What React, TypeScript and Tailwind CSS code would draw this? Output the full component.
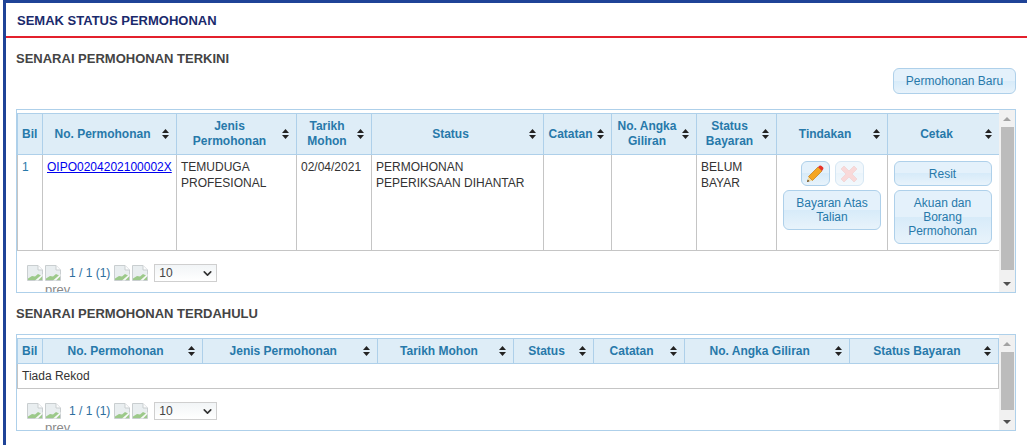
import { ChevronDown } from "lucide-react";

const font = "font-['Liberation_Sans',Arial,sans-serif]";

const SortIcon = () => (
  <svg width="7" height="10" viewBox="0 0 7 10" className="shrink-0 fill-[#222222]">
    <path d="M3.5 0 L7 4 L0 4 Z" />
    <path d="M0 6 L7 6 L3.5 10 Z" />
  </svg>
);

const BrokenImage = () => (
  <svg width="16" height="16" viewBox="0 0 16 16" className="shrink-0">
    <path d="M0.5 0.5 H11 L15.5 5 V15.5 H0.5 Z" fill="#e9eef0" stroke="#c9ced0" />
    <path d="M11 0.5 V5 H15.5" fill="#fbfcfc" stroke="#c9ced0" />
    <path d="M1 15 V13.5 L5 11 L8 11.5 L11 9 L15 11 V15 Z" fill="#9cc98a" />
    <path d="M8 15.5 L15.5 9 V11 L11 15.5 Z" fill="#f6f8f7" />
  </svg>
);

const Scrollbar = ({ thumb }: { thumb: string }) => (
  <div className="flex w-[16px] flex-col items-center bg-[#f1f1f1]">
    <div className="flex h-[17px] w-full items-center justify-center">
      <div className="h-0 w-0 border-x-[4px] border-b-[4px] border-x-transparent border-b-[#a3a3a3]" />
    </div>
    <div className={`${thumb} w-[13px] bg-[#bcbcbc]`} />
    <div className="flex-1" />
    <div className="flex h-[17px] w-full items-center justify-center">
      <div className="h-0 w-0 border-x-[4px] border-t-[4px] border-x-transparent border-t-[#505050]" />
    </div>
  </div>
);

const Pager = () => (
  <div className="flex items-center pl-[10px] pt-[13px]">
    <BrokenImage />
    <div className="relative ml-[2px] flex">
      <BrokenImage />
      <span className="absolute left-0 top-[18px] text-[13px] leading-[14px] text-[#8a8a8a]">prev</span>
    </div>
    <span className="ml-[8px] text-[12px] text-[#2e6e9e]">1 / 1 (1)</span>
    <div className="ml-[4px] flex gap-[2px]">
      <BrokenImage />
      <BrokenImage />
    </div>
    <div className="ml-[6px] flex h-[18px] w-[63px] items-center justify-between border border-[#cfcfcf] bg-gradient-to-b from-[#f2f5f7] to-white pl-[4px] pr-[2px] text-[12px] text-[#444444]">
      10
      <ChevronDown size={13} strokeWidth={3} className="text-[#333333]" />
    </div>
  </div>
);

const Th = ({ label, sort = true, width }: { label: string; sort?: boolean; width: string }) => (
  <th className={`${width} border border-[#aed0ea] bg-[#deedf7] p-0 align-middle`}>
    <div className="flex items-center pl-[4px] pr-[7px]">
      <span className={`${sort ? "pr-[4px]" : ""} flex-1 text-center text-[12px] font-bold leading-[15px] text-[#2779aa]`}>
        {label}
      </span>
      {sort && <SortIcon />}
    </div>
  </th>
);

const Td = ({ children, width }: { children?: React.ReactNode; width?: string }) => (
  <td className={`${width ?? ""} border border-[#c5c5c5] px-[4px] pt-[4px] align-top text-[12px] leading-[16px] text-[#333333]`}>
    {children}
  </td>
);

const Btn = ({ children, className }: { children: React.ReactNode; className: string }) => (
  <div
    className={`${className} flex items-center justify-center rounded-[6px] border border-[#aed0ea] bg-[linear-gradient(#e4f1fb_50%,#d7ebf9_50%,#e8f3fb)] text-center text-[12px] leading-[14px] text-[#2779aa]`}
  >
    {children}
  </div>
);

const Pencil = () => (
  <svg width="18" height="18" viewBox="0 0 18 18">
    <path d="M1 17 L2.5 11.5 L6.5 15.5 Z" fill="#f3dca4" />
    <path d="M1 17 L1.7 14.5 L3.5 16.2 Z" fill="#5a3a10" />
    <path d="M2.5 11.5 L12 2 L16 6 L6.5 15.5 Z" fill="#f5a623" stroke="#b96f0a" strokeWidth="0.6" />
    <path d="M12 2 L13.5 0.7 C14.2 0.2 15 0.3 15.6 0.9 L17 2.3 C17.6 3 17.6 3.7 17 4.4 L16 6 Z" fill="#e8342a" />
  </svg>
);

const Cross = () => (
  <svg width="18" height="18" viewBox="0 0 18 18">
    <path
      d="M1 4 L4 1 L9 6 L14 1 L17 4 L12 9 L17 14 L14 17 L9 12 L4 17 L1 14 L6 9 Z"
      fill="#f5b5b5"
      stroke="#e0a0a0"
      strokeWidth="0.6"
    />
  </svg>
);

const App = () => {
  return (
    <div className={`${font} h-[445px] w-[1027px] overflow-hidden bg-white pl-[3px]`}>
      <div className="h-full border-l-[3px] border-t-[3px] border-[#1f4397]">
        <div className="flex h-[35px] items-center border-b-[2px] border-[#e3202c] pl-[11px] pt-[3px] text-[13px] font-bold text-[#1a2a6c]">
          SEMAK STATUS PERMOHONAN
        </div>
        <div className="pl-[10px] pr-[11px]">
          <h2 className="pt-[14px] text-[13px] font-bold leading-[14px] text-[#444444]">SENARAI PERMOHONAN TERKINI</h2>
          <div className="flex justify-end pt-[2px]">
            <Btn className="h-[26px] w-[123px]">Permohonan Baru</Btn>
          </div>

          <div className="mt-[15px] flex h-[184px] overflow-hidden border border-[#aed0ea]">
            <div className="w-[982px] pt-[3px]">
              <table className="w-[982px] table-fixed border-collapse">
                <thead>
                  <tr className="h-[41px]">
                    <Th label="Bil" sort={false} width="w-[25px]" />
                    <Th label="No. Permohonan" width="w-[134px]" />
                    <Th label="Jenis Permohonan" width="w-[120px]" />
                    <Th label="Tarikh Mohon" width="w-[75px]" />
                    <Th label="Status" width="w-[172px]" />
                    <Th label="Catatan" width="w-[68px]" />
                    <Th label="No. Angka Giliran" width="w-[85px]" />
                    <Th label="Status Bayaran" width="w-[80px]" />
                    <Th label="Tindakan" width="w-[111px]" />
                    <Th label="Cetak" width="w-[112px]" />
                  </tr>
                </thead>
                <tbody>
                  <tr className="h-[96px]">
                    <Td>
                      <span className="text-[#2779aa]">1</span>
                    </Td>
                    <Td>
                      <a href="#" className="text-[#0000ee] underline">OIPO0204202100002X</a>
                    </Td>
                    <Td>TEMUDUGA PROFESIONAL</Td>
                    <Td>02/04/2021</Td>
                    <Td>PERMOHONAN PEPERIKSAAN DIHANTAR</Td>
                    <Td />
                    <Td />
                    <Td>BELUM BAYAR</Td>
                    <Td>
                      <div className="mt-[2px] flex flex-col items-center gap-[4px]">
                        <div className="flex gap-[5px]">
                          <Btn className="h-[25px] w-[29px]"><Pencil /></Btn>
                          <Btn className="h-[25px] w-[29px] opacity-50"><Cross /></Btn>
                        </div>
                        <Btn className="h-[40px] w-[98px]">
                          <span>Bayaran Atas<br />Talian</span>
                        </Btn>
                      </div>
                    </Td>
                    <Td>
                      <div className="mt-[2px] flex flex-col items-center gap-[4px] pr-[2px]">
                        <Btn className="h-[25px] w-[98px]">Resit</Btn>
                        <Btn className="h-[54px] w-[98px]">
                          <span>Akuan dan<br />Borang<br />Permohonan</span>
                        </Btn>
                      </div>
                    </Td>
                  </tr>
                </tbody>
              </table>
              <Pager />
            </div>
            <Scrollbar thumb="h-[143px]" />
          </div>

          <h2 className="pt-[14px] text-[13px] font-bold leading-[14px] text-[#444444]">SENARAI PERMOHONAN TERDAHULU</h2>

          <div className="mt-[13px] flex h-[97px] overflow-hidden border border-[#aed0ea]">
            <div className="w-[982px] pt-[3px]">
              <table className="w-[982px] table-fixed border-collapse">
                <thead>
                  <tr className="h-[25px]">
                    <Th label="Bil" sort={false} width="w-[25px]" />
                    <Th label="No. Permohonan" width="w-[160px]" />
                    <Th label="Jenis Permohonan" width="w-[175px]" />
                    <Th label="Tarikh Mohon" width="w-[136px]" />
                    <Th label="Status" width="w-[79px]" />
                    <Th label="Catatan" width="w-[91px]" />
                    <Th label="No. Angka Giliran" width="w-[165px]" />
                    <Th label="Status Bayaran" width="w-[149px]" />
                  </tr>
                </thead>
                <tbody>
                  <tr className="h-[25px]">
                    <td colSpan={8} className="border border-[#c5c5c5] px-[4px] text-[12px] text-[#333333]">
                      Tiada Rekod
                    </td>
                  </tr>
                </tbody>
              </table>
              <Pager />
            </div>
            <Scrollbar thumb="h-[58px]" />
          </div>
        </div>
      </div>
    </div>
  );
};

export default App;
